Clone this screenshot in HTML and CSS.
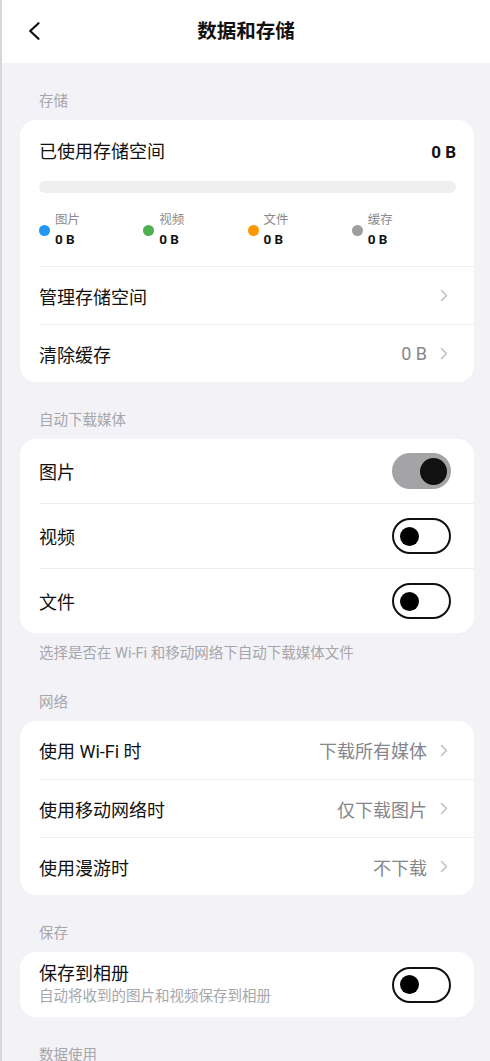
FILE: index.html
```html
<!DOCTYPE html>
<html lang="zh-CN">
<head>
<meta charset="utf-8">
<meta name="viewport" content="width=device-width, initial-scale=1">
<title>数据和存储</title>
<link rel="stylesheet" href="styles.css">
</head>
<body>
<div class="page">
  <header class="topbar">
    <button class="back" aria-label="返回">
      <svg width="12" height="18" viewBox="0 0 12 18"><path d="M10.5 1.2 L2.2 9 L10.5 16.8" fill="none" stroke="#111" stroke-width="2.2" stroke-linecap="round" stroke-linejoin="round"/></svg>
    </button>
    <h1 class="title">数据和存储</h1>
    <span></span>
  </header>

  <main class="content">
    <div class="label">存储</div>
    <section class="card">
      <div class="usage">
        <div class="usage-head"><span>已使用存储空间</span><span class="usage-total">0 B</span></div>
        <div class="bar"></div>
        <div class="legend">
          <div class="legend-item"><span class="dot dot-blue"></span><span class="legend-name">图片</span><span class="legend-value">0 B</span></div>
          <div class="legend-item"><span class="dot dot-green"></span><span class="legend-name">视频</span><span class="legend-value">0 B</span></div>
          <div class="legend-item"><span class="dot dot-orange"></span><span class="legend-name">文件</span><span class="legend-value">0 B</span></div>
          <div class="legend-item"><span class="dot dot-gray"></span><span class="legend-name">缓存</span><span class="legend-value">0 B</span></div>
        </div>
      </div>
      <div class="row">
        <span>管理存储空间</span>
        <span class="row-value"><svg class="chev" viewBox="0 0 8 13"><path d="M1.5 1.5 L6.5 6.5 L1.5 11.5" fill="none" stroke="#c2c2c5" stroke-width="1.6" stroke-linecap="round" stroke-linejoin="round"/></svg></span>
      </div>
      <div class="row">
        <span>清除缓存</span>
        <span class="row-value">0 B<svg class="chev" viewBox="0 0 8 13"><path d="M1.5 1.5 L6.5 6.5 L1.5 11.5" fill="none" stroke="#c2c2c5" stroke-width="1.6" stroke-linecap="round" stroke-linejoin="round"/></svg></span>
      </div>
    </section>

    <div class="label">自动下载媒体</div>
    <section class="card">
      <div class="row row-toggle">
        <span>图片</span>
        <span class="switch on"><span class="knob"></span></span>
      </div>
      <div class="row row-toggle">
        <span>视频</span>
        <span class="switch"><span class="knob"></span></span>
      </div>
      <div class="row row-toggle">
        <span>文件</span>
        <span class="switch"><span class="knob"></span></span>
      </div>
    </section>
    <p class="note">选择是否在 Wi-Fi 和移动网络下自动下载媒体文件</p>

    <div class="label">网络</div>
    <section class="card">
      <div class="row">
        <span>使用 Wi-Fi 时</span>
        <span class="row-value">下载所有媒体<svg class="chev" viewBox="0 0 8 13"><path d="M1.5 1.5 L6.5 6.5 L1.5 11.5" fill="none" stroke="#c2c2c5" stroke-width="1.6" stroke-linecap="round" stroke-linejoin="round"/></svg></span>
      </div>
      <div class="row">
        <span>使用移动网络时</span>
        <span class="row-value">仅下载图片<svg class="chev" viewBox="0 0 8 13"><path d="M1.5 1.5 L6.5 6.5 L1.5 11.5" fill="none" stroke="#c2c2c5" stroke-width="1.6" stroke-linecap="round" stroke-linejoin="round"/></svg></span>
      </div>
      <div class="row">
        <span>使用漫游时</span>
        <span class="row-value">不下载<svg class="chev" viewBox="0 0 8 13"><path d="M1.5 1.5 L6.5 6.5 L1.5 11.5" fill="none" stroke="#c2c2c5" stroke-width="1.6" stroke-linecap="round" stroke-linejoin="round"/></svg></span>
      </div>
    </section>

    <div class="label">保存</div>
    <section class="card">
      <div class="row row-sub">
        <span class="row-text">
          <span>保存到相册</span>
          <span class="row-desc">自动将收到的图片和视频保存到相册</span>
        </span>
        <span class="switch"><span class="knob"></span></span>
      </div>
    </section>

    <div class="label">数据使用</div>
  </main>
</div>
</body>
</html>
```

FILE: styles.css
```css
* {
  box-sizing: border-box;
  margin: 0;
  padding: 0;
}

html, body {
  background: #f2f2f7;
}

body {
  font-family: Roboto, "Noto Sans CJK SC", sans-serif;
  color: #111;
  overflow: hidden;
}

.page {
  border-left: 2px solid #d8d8dc;
  min-height: 100vh;
  background: #f2f2f7;
}

.topbar {
  height: 63px;
  background: #fff;
  display: grid;
  grid-template-columns: 1fr auto 1fr;
  align-items: center;
}

.back {
  justify-self: start;
  margin-left: 26px;
  margin-top: -1px;
  width: 12px;
  height: 18px;
  display: flex;
  border: none;
  background: none;
}

.title {
  font-size: 19.5px;
  font-weight: 700;
  line-height: 28px;
}

.content {
  padding: 0 16px 40px 18px;
}

.label {
  font-size: 14.5px;
  line-height: 20px;
  color: #a6a6ab;
  padding: 29px 0 8px 19px;
}

.note {
  font-size: 14.5px;
  line-height: 20px;
  color: #a6a6ab;
  padding: 11px 0 0 19px;
}

.card {
  background: #fff;
  border-radius: 16px;
  padding-left: 19px;
  overflow: hidden;
}

.usage {
  padding: 20px 18px 18px 0;
}

.usage-head {
  display: flex;
  justify-content: space-between;
  font-size: 18px;
  line-height: 24px;
}

.usage-total {
  font-size: 17px;
  font-weight: 700;
}

.bar {
  height: 12px;
  border-radius: 6px;
  background: #efeff0;
  margin-top: 17px;
}

.legend {
  display: grid;
  grid-template-columns: repeat(4, 1fr);
  margin-top: 19px;
}

.legend-item {
  display: grid;
  grid-template-columns: 11px auto;
  column-gap: 5px;
  justify-content: start;
}

.dot {
  grid-row: 1 / span 2;
  align-self: center;
  width: 11px;
  height: 11px;
  border-radius: 50%;
  margin-top: 1px;
}

.dot-blue { background: #2196f3; }
.dot-green { background: #4caf50; }
.dot-orange { background: #ff9800; }
.dot-gray { background: #9e9e9e; }

.legend-name {
  font-size: 12.5px;
  line-height: 16px;
  color: #8a8a8e;
}

.legend-value {
  font-size: 13.5px;
  font-weight: 700;
  line-height: 18px;
  margin-top: 2px;
}

.row {
  display: flex;
  align-items: center;
  justify-content: space-between;
  height: 58px;
  padding-right: 26px;
  font-size: 18px;
}

.usage + .row,
.row + .row {
  border-top: 1px solid #ededef;
}

.row-toggle {
  height: 64px;
  padding-right: 23px;
}

.row + .row-toggle {
  height: 65px;
}

.row-sub {
  height: 65px;
  padding-right: 23px;
}

.row-value {
  display: flex;
  align-items: center;
  color: #86868a;
  font-size: 18px;
}

.chev {
  width: 8px;
  height: 13px;
  margin-left: 13px;
}

.row-text {
  display: flex;
  flex-direction: column;
  line-height: 24px;
}

.row-desc {
  font-size: 14.5px;
  line-height: 20px;
  color: #a6a6ab;
  margin-top: 1px;
}

.switch {
  width: 59px;
  height: 36px;
  border-radius: 18px;
  border: 2.5px solid #111;
  background: #fff;
  display: flex;
  align-items: center;
  padding-left: 5.5px;
  flex-shrink: 0;
}

.switch .knob {
  width: 19px;
  height: 19px;
  border-radius: 50%;
  background: #000;
}

.switch.on {
  border: none;
  background: #a4a4a6;
  justify-content: flex-end;
  padding-left: 0;
  padding-right: 4.5px;
}

.switch.on .knob {
  width: 27px;
  height: 27px;
  background: #111;
}
```
